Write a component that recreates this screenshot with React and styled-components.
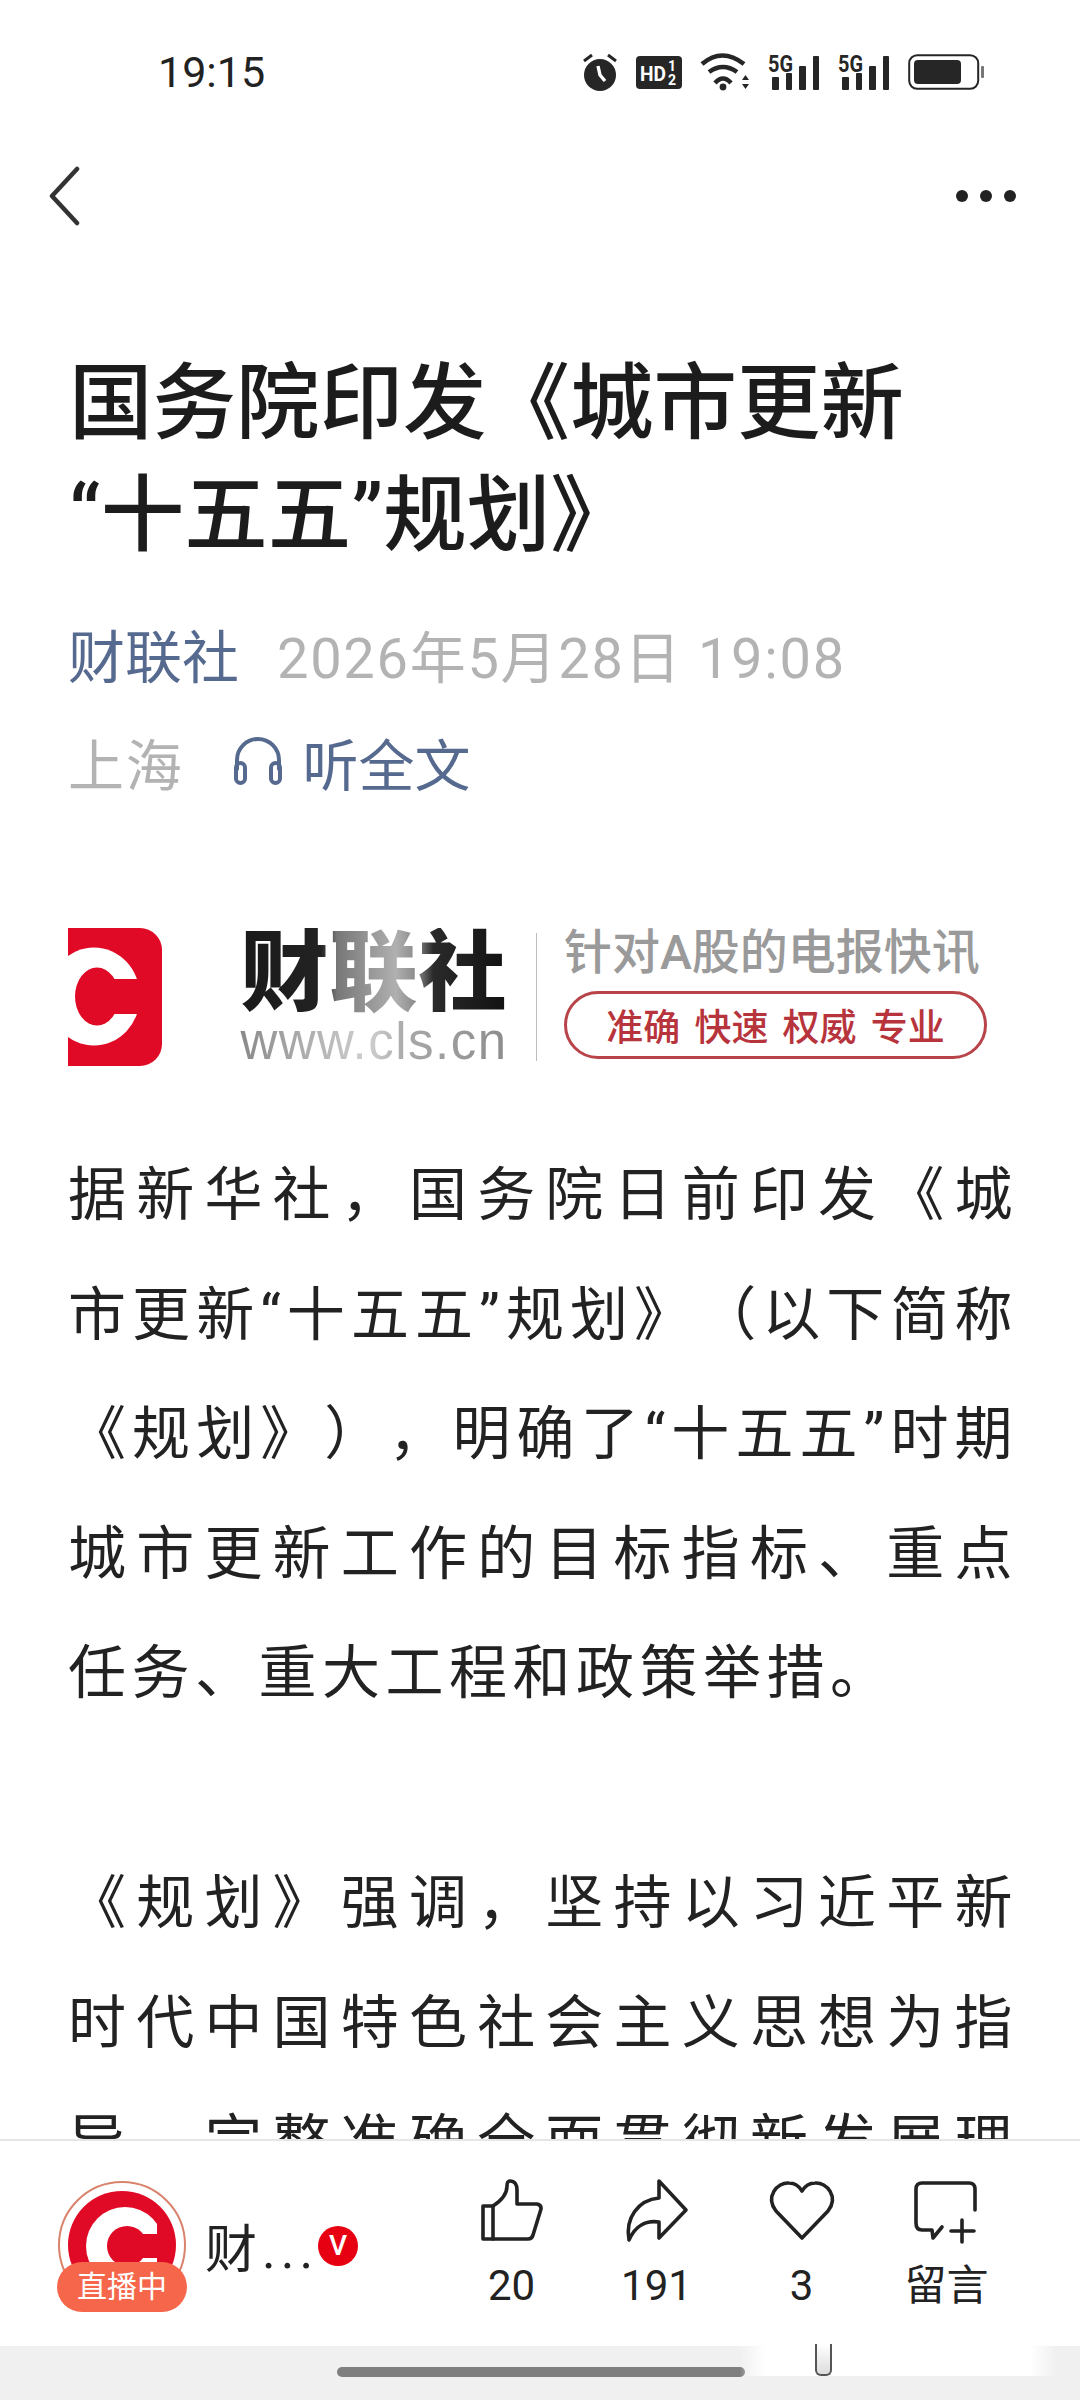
import styled, { createGlobalStyle } from "styled-components";

const GlobalStyle = createGlobalStyle`
  html, body {
    margin: 0;
    padding: 0;
    background: #fff;
  }
`;

const FONT = `Roboto, "Noto Sans CJK SC", sans-serif`;

const paragraphs = [
  [
    "据新华社，国务院日前印发《城",
    "市更新“十五五”规划》（以下简称",
    "《规划》），明确了“十五五”时期",
    "城市更新工作的目标指标、重点",
    "任务、重大工程和政策举措。",
  ],
  [
    "《规划》强调，坚持以习近平新",
    "时代中国特色社会主义思想为指",
    "导，完整准确全面贯彻新发展理",
  ],
];

function App() {
  return (
    <Page>
      <GlobalStyle />
      <StatusBar>
        <Clock>19:15</Clock>
        <StatusIcons>
          <AlarmIcon />
          <HdIcon />
          <WifiIcon />
          <SignalIcon />
          <SignalIcon />
          <BatteryIcon />
        </StatusIcons>
      </StatusBar>
      <TopBar>
        <svg width="34" height="60" viewBox="0 0 34 60">
          <path d="M30 3 L5 30 L30 57" fill="none" stroke="#333" strokeWidth="4.5" strokeLinecap="round" strokeLinejoin="round" />
        </svg>
        <Dots>
          <i />
          <i />
          <i />
        </Dots>
      </TopBar>
      <Article>
        <Title>
          国务院印发《城市更新
          <br />
          “十五五”规划》
        </Title>
        <MetaRow>
          <Source>财联社</Source>
          <Muted>2026年5月28日 19:08</Muted>
        </MetaRow>
        <MetaRow>
          <Muted>上海</Muted>
          <Listen>
            <svg width="50" height="50" viewBox="0 0 50 50" fill="none" stroke="#566a8f" strokeWidth="4" strokeLinecap="round">
              <path d="M4 33 V24 a21 21 0 0 1 42 0 V33" />
              <rect x="3" y="27" width="9" height="20" rx="4.5" />
              <rect x="38" y="27" width="9" height="20" rx="4.5" />
            </svg>
            听全文
          </Listen>
        </MetaRow>
        <Banner>
          <LogoMark viewBox="0 0 94 138">
            <path d="M0 0 H72 a22 22 0 0 1 22 22 V116 a22 22 0 0 1 -22 22 H0 Z" fill="#e10a26" />
            <ellipse cx="26" cy="68.5" rx="46" ry="49" fill="#fff" />
            <ellipse cx="29" cy="68.5" rx="22" ry="29" fill="#e10a26" />
            <rect x="29" y="51" width="50" height="35" fill="#e10a26" />
          </LogoMark>
          <BrandBlock>
            <BrandName>财联社</BrandName>
            <BrandUrl>www.cls.cn</BrandUrl>
          </BrandBlock>
          <BannerDivider />
          <SloganBlock>
            <Slogan>针对A股的电报快讯</Slogan>
            <SloganPill>准确 快速 权威 专业</SloganPill>
          </SloganBlock>
        </Banner>
        {paragraphs.map((lines, i) => (
          <Paragraph key={i}>
            {lines.map((line, j) => (
              <Line key={j} $last={i === 0 && j === lines.length - 1}>
                {line}
              </Line>
            ))}
          </Paragraph>
        ))}
      </Article>
      <BottomBar>
        <Author>
          <Avatar>
            <svg width="130" height="130" viewBox="0 0 130 130">
              <circle cx="65" cy="65" r="63" fill="#fff" stroke="#d9836d" strokeWidth="2" />
              <circle cx="65" cy="65" r="54" fill="#e10a26" />
              <circle cx="68" cy="66" r="39" fill="#fff" />
              <circle cx="70" cy="66" r="20" fill="#e10a26" />
              <rect x="68" y="54" width="40" height="24" fill="#e10a26" />
              <rect x="100" y="40" width="10" height="52" fill="#e10a26" />
            </svg>
            <LiveBadge>直播中</LiveBadge>
          </Avatar>
          <AuthorName>财...</AuthorName>
          <VBadge>V</VBadge>
        </Author>
        <Actions>
          <Action>
            <svg width="62" height="62" viewBox="0 0 62 62" fill="none" stroke="#222" strokeWidth="3.6" strokeLinejoin="round" strokeLinecap="round">
              <path d="M12 26 H2 V59 H47 Q51 59 52 55 L60 29 Q60.5 25 56 24 H36 V10 Q36 1 29 1 Q26 1 26 6 Q26 17 12 26 Z" />
              <path d="M12 26 V59" />
            </svg>
            <ActionLabel>20</ActionLabel>
          </Action>
          <Action>
            <svg width="62" height="62" viewBox="0 0 62 62" fill="none" stroke="#222" strokeWidth="3.6" strokeLinejoin="round" strokeLinecap="round">
              <path d="M33 1 L60 30 L33 58 V42 C20 40 9 46 3 60 C-1 38 12 20 33 18 Z" />
            </svg>
            <ActionLabel>191</ActionLabel>
          </Action>
          <Action>
            <svg width="66" height="62" viewBox="0 0 66 62" fill="none" stroke="#222" strokeWidth="3.6" strokeLinejoin="round">
              <path d="M33 58 L7 31 C-4 17 8 2 20 3 C26 3 30 6 33 11 C36 6 40 3 46 3 C58 2 70 17 59 31 Z" />
            </svg>
            <ActionLabel>3</ActionLabel>
          </Action>
          <Action>
            <svg width="68" height="62" viewBox="0 0 68 62" fill="none" stroke="#222" strokeWidth="3.6" strokeLinejoin="round" strokeLinecap="round">
              <path d="M62 30 V9 Q62 3 56 3 H9 Q3 3 3 9 V43 Q3 50 9 50 H19 L20 58 L29 47" />
              <path d="M49 40 V62 M38 51 H61" />
            </svg>
            <ActionLabel>留言</ActionLabel>
          </Action>
        </Actions>
      </BottomBar>
      <NavBar>
        <NavPill />
        <NavFade />
        <NavNotch />
      </NavBar>
    </Page>
  );
}

function AlarmIcon() {
  return (
    <svg width="36" height="38" viewBox="0 0 36 38" fill="#262626">
      <circle cx="18" cy="22" r="16" />
      <path d="M2 8 L10 2 M34 8 L26 2" stroke="#262626" strokeWidth="3" />
      <path d="M16 13 L18 22 L23 28" fill="none" stroke="#fff" strokeWidth="3.4" />
    </svg>
  );
}

function HdIcon() {
  return (
    <svg width="46" height="33" viewBox="0 0 46 33">
      <rect width="46" height="33" rx="4" fill="#262626" />
      <text x="4" y="25" fontFamily="Roboto, sans-serif" fontSize="21" fontWeight="700" fill="#fff" textLength="26" lengthAdjust="spacingAndGlyphs">HD</text>
      <text x="32" y="15" fontFamily="Roboto, sans-serif" fontSize="14" fontWeight="700" fill="#fff">1</text>
      <text x="32" y="29" fontFamily="Roboto, sans-serif" fontSize="14" fontWeight="700" fill="#fff">2</text>
    </svg>
  );
}

function WifiIcon() {
  return (
    <svg width="50" height="38" viewBox="0 0 50 38" fill="none" stroke="#262626" strokeWidth="4.6">
      <path d="M2 11 Q22 -6 44 11" />
      <path d="M9 19 Q23 9 37 19" />
      <path d="M15 30 Q23 21 31 30" />
      <circle cx="23" cy="34" r="3.4" fill="#262626" stroke="none" />
      <path d="M42 27 L45.5 22 L49 27 Z M42 31 L49 31 L45.5 36 Z" fill="#262626" stroke="none" />
    </svg>
  );
}

function SignalIcon() {
  return (
    <svg width="52" height="36" viewBox="0 0 52 36" fill="#262626">
      <text x="0" y="18" fontFamily="Roboto, sans-serif" fontSize="24" fontWeight="700" textLength="25" lengthAdjust="spacingAndGlyphs">5G</text>
      <rect x="4" y="23" width="7" height="13" rx="1" />
      <rect x="18" y="19" width="6" height="17" rx="1" />
      <rect x="31" y="12" width="7" height="24" rx="1" />
      <rect x="45" y="2" width="6" height="34" rx="1" />
    </svg>
  );
}

function BatteryIcon() {
  return (
    <svg width="77" height="36" viewBox="0 0 77 36">
      <rect x="1.2" y="1.2" width="69" height="33.6" rx="8" fill="none" stroke="#262626" strokeWidth="2" />
      <rect x="6" y="6" width="47" height="24" rx="4" fill="#262626" />
      <rect x="73" y="12" width="3" height="12" rx="1" fill="#777" />
    </svg>
  );
}

const Page = styled.div`
  width: 1080px;
  height: 2400px;
  display: flex;
  flex-direction: column;
  overflow: hidden;
  background: #fff;
  color: #222;
  font-family: ${FONT};
`;

const StatusBar = styled.div`
  height: 144px;
  display: flex;
  align-items: flex-start;
  justify-content: space-between;
  padding: 53px 95px 0 158px;
  box-sizing: border-box;
  flex-shrink: 0;
`;

const Clock = styled.div`
  font-size: 43px;
  line-height: 38px;
  color: #222;
`;

const StatusIcons = styled.div`
  display: flex;
  align-items: center;
  gap: 18px;
`;

const TopBar = styled.div`
  height: 104px;
  display: flex;
  align-items: center;
  justify-content: space-between;
  padding: 0 64px 0 47px;
  flex-shrink: 0;
`;

const Dots = styled.div`
  display: flex;
  gap: 12px;
  i {
    display: block;
    width: 12px;
    height: 12px;
    border-radius: 50%;
    background: #222;
  }
`;

const Article = styled.div`
  flex: 1;
  min-height: 0;
  overflow: hidden;
  padding: 100px 62px 0 68px;
`;

const Title = styled.h1`
  margin: 0 0 27px 1px;
  font-size: 83.5px;
  line-height: 112px;
  font-weight: 500;
  color: #1c1c1c;
`;

const MetaRow = styled.div`
  display: flex;
  align-items: center;
  height: 108px;
  font-size: 56px;
  letter-spacing: 1.7px;
`;

const Source = styled.span`
  color: #566a8f;
  margin-right: 38px;
  font-size: 57px;
  letter-spacing: 0;
`;

const Muted = styled.span`
  color: #b3b3b3;
`;

const Listen = styled.span`
  display: flex;
  align-items: center;
  gap: 19px;
  margin-left: 50px;
  color: #566a8f;
  letter-spacing: 0;
`;

const Banner = styled.div`
  display: flex;
  align-items: flex-start;
  height: 138px;
  margin: 113px 0 70px;
`;

const LogoMark = styled.svg`
  width: 94px;
  height: 138px;
  flex-shrink: 0;
`;

const BrandBlock = styled.div`
  width: 262px;
  margin-left: 81px;
  display: flex;
  flex-direction: column;
  align-items: center;
`;

const BrandName = styled.div`
  font-size: 88px;
  line-height: 90px;
  font-weight: 900;
  letter-spacing: 1px;
  white-space: nowrap;
  background: linear-gradient(90deg, #1a1a1a 0%, #222 30%, #777 36%, #b0b0b0 58%, #888 66%, #2a2a2a 72%, #111 100%);
  -webkit-background-clip: text;
  background-clip: text;
  color: transparent;
`;

const BrandUrl = styled.div`
  font-family: "Liberation Sans", sans-serif;
  font-size: 51px;
  line-height: 48px;
  letter-spacing: 1.5px;
  white-space: nowrap;
  background: linear-gradient(90deg, #8a8a8a, #cfcfcf 48%, #a8a8a8 62%, #8c8c8c);
  -webkit-background-clip: text;
  background-clip: text;
  color: transparent;
`;

const BannerDivider = styled.div`
  width: 1px;
  height: 128px;
  align-self: center;
  background: #bdbdbd;
  margin: 0 27px 0 31px;
`;

const SloganBlock = styled.div`
  width: 423px;
  display: flex;
  flex-direction: column;
  gap: 13px;
`;

const Slogan = styled.div`
  font-size: 48px;
  line-height: 50px;
  color: #9a9a9a;
  font-weight: 500;
  white-space: nowrap;
`;

const SloganPill = styled.div`
  width: 423px;
  height: 68px;
  box-sizing: border-box;
  border: 3px solid #b8444a;
  border-radius: 34px;
  display: flex;
  align-items: center;
  justify-content: center;
  font-size: 37px;
  font-weight: 500;
  color: #b8343c;
  white-space: pre;
  word-spacing: 5px;
`;

const Paragraph = styled.div`
  margin-bottom: 110px;
`;

const Line = styled.div`
  width: 950px;
  font-size: 58px;
  line-height: 119.6px;
  letter-spacing: 5.5px;
  color: #222;
  text-spacing-trim: space-all;
  text-align: justify;
  text-align-last: ${(p) => (p.$last ? "left" : "justify")};
`;

const BottomBar = styled.div`
  height: 207px;
  box-sizing: border-box;
  border-top: 2px solid #e6e6e6;
  display: flex;
  align-items: center;
  justify-content: space-between;
  padding: 0 61px 0 57px;
  background: #fff;
  flex-shrink: 0;
`;

const Author = styled.div`
  display: flex;
  align-items: center;
  margin-top: 4px;
`;

const Avatar = styled.div`
  position: relative;
  width: 130px;
  height: 132px;
  svg {
    display: block;
  }
`;

const LiveBadge = styled.div`
  position: absolute;
  left: 0;
  bottom: 0;
  width: 130px;
  height: 50px;
  border-radius: 25px;
  background: #f5664a;
  color: #fff;
  font-size: 30px;
  line-height: 50px;
  text-align: center;
`;

const AuthorName = styled.div`
  margin-left: 18px;
  font-size: 52px;
  color: #222;
  letter-spacing: 5px;
`;

const VBadge = styled.div`
  width: 40px;
  height: 40px;
  border-radius: 50%;
  background: #e60012;
  color: #fff;
  font-size: 28px;
  font-weight: 500;
  line-height: 40px;
  text-align: center;
`;

const Actions = styled.div`
  display: grid;
  grid-template-columns: repeat(4, 145px);
`;

const Action = styled.div`
  display: flex;
  flex-direction: column;
  align-items: center;
  gap: 22px;
  svg {
    overflow: visible;
  }
`;

const ActionLabel = styled.div`
  font-size: 42px;
  line-height: 44px;
  color: #222;
`;

const NavBar = styled.div`
  position: relative;
  height: 54px;
  flex-shrink: 0;
  background: #f0f0f0;
  padding-top: 21px;
  box-sizing: border-box;
`;

const NavPill = styled.div`
  width: 408px;
  height: 10px;
  margin-left: 337px;
  border-radius: 5px;
  background: #7f7f7f;
`;

const NavFade = styled.div`
  position: absolute;
  left: 740px;
  top: 0;
  width: 316px;
  height: 30px;
  background: linear-gradient(90deg, rgba(255, 255, 255, 0), #fff 8%, #fff 92%, rgba(255, 255, 255, 0));
`;

const NavNotch = styled.div`
  position: absolute;
  left: 815px;
  top: -2px;
  width: 17px;
  height: 32px;
  box-sizing: border-box;
  border: 2px solid #555;
  border-top: 0;
  border-radius: 0 0 6px 6px;
  background: linear-gradient(#fff, #ddd);
`;

export default App;
